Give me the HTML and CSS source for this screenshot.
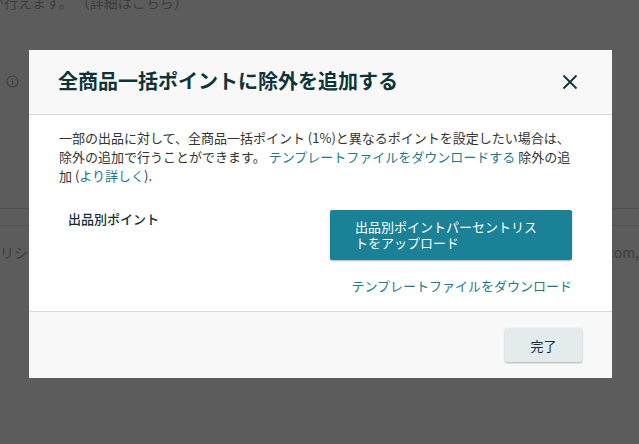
FILE: index.html
```html
<!DOCTYPE html>
<html lang="ja">
<head>
<meta charset="utf-8">
<title>全商品一括ポイントに除外を追加する</title>
<link rel="stylesheet" href="styles.css">
</head>
<body>
<main class="page">
  <p class="page-note">が行えます。 （詳細はこちら）</p>
  <div class="page-info">
    <svg class="info-icon" width="13" height="13" viewBox="0 0 13 13" aria-hidden="true">
      <circle cx="6.5" cy="6.5" r="5.5" fill="none" stroke="currentColor" stroke-width="1.1"/>
      <path d="M6.5 5.8v3.6" stroke="currentColor" stroke-width="1.2" fill="none"/>
      <circle cx="6.5" cy="4" r=".8" fill="currentColor"/>
    </svg>
  </div>
  <div class="page-rows">
    <div class="page-row"></div>
    <div class="page-row-text">
      <span>リシー</span><span class="page-row-end">com,</span>
    </div>
  </div>
</main>
<div class="overlay"></div>
<section class="modal">
  <header class="modal-head">
    <h1 class="modal-title">全商品一括ポイントに除外を追加する</h1>
    <svg class="close" width="16" height="16" viewBox="0 0 16 16" aria-label="閉じる">
      <path d="M1.5 1.5l13 13M14.5 1.5l-13 13" stroke="currentColor" stroke-width="1.8" fill="none"/>
    </svg>
  </header>
  <div class="modal-body">
    <p class="intro">一部の出品に対して、全商品一括ポイント (1%)と異なるポイントを設定したい場合は、除外の追加で行うことができます。 <a class="link" href="#">テンプレートファイルをダウンロードする</a> 除外の追加 (<a class="link" href="#">より詳しく</a>).</p>
    <div class="upload-row">
      <div class="upload-label">出品別ポイント</div>
      <div class="upload-col">
        <button class="btn-primary" type="button">出品別ポイントパーセントリストをアップロード</button>
        <a class="link download" href="#">テンプレートファイルをダウンロード</a>
      </div>
    </div>
  </div>
  <footer class="modal-foot">
    <button class="btn-done" type="button">完了</button>
  </footer>
</section>
</body>
</html>
```
FILE: styles.css
```css
* { box-sizing: border-box; }
html, body { margin: 0; height: 100%; overflow: hidden; }
body {
  background: #fff;
  color: #111;
  font-family: "Noto Sans CJK JP", "Noto Sans", sans-serif;
  font-size: 13px;
}
.page { height: 444px; overflow: hidden; color: #aaa; }
.page-note {
  margin: -8px 0 0 -10px;
  font-size: 14px;
  line-height: 20px;
  white-space: nowrap;
}
.page-info { padding: 63px 0 0 6px; height: 88px; }
.info-icon { display: block; }
.page-rows { margin-top: 108px; border-top: 1px solid #ddd; }
.page-row { height: 17px; border-bottom: 1px solid #ddd; }
.page-row-text {
  display: flex;
  justify-content: space-between;
  margin-top: 16px;
  line-height: 20px;
  font-size: 14px;
}
.overlay { position: fixed; inset: 0; background: rgba(0, 0, 0, .64); }
.modal {
  position: fixed;
  left: 29px;
  top: 50px;
  width: 583px;
  height: 328px;
  background: #fff;
  display: flex;
  flex-direction: column;
}
.modal-head {
  height: 65px;
  flex: none;
  background: #f8f8f8;
  border-bottom: 1px solid #d5d9d9;
  padding: 0 34px 2px 29px;
  display: flex;
  align-items: center;
  justify-content: space-between;
}
.modal-title {
  margin: 0;
  font-size: 20px;
  line-height: 28px;
  font-weight: 700;
  color: #0f3438;
}
.close { color: #0f3438; flex: none; margin-top: 2px; width: 16px; height: 16px; }
.modal-body { flex: 1; padding: 13px 40px 0 30px; }
.intro {
  margin: 0;
  font-size: 13px;
  line-height: 19px;
  color: #333;
}
.link { color: #1a7b8e; text-decoration: none; }
.upload-row { display: flex; justify-content: space-between; margin-top: 25px; padding-left: 9px; }
.upload-label { font-size: 13px; line-height: 20px; font-weight: 500; color: #0f2f33; margin-top: -1px; }
.upload-col { width: 242px; display: flex; flex-direction: column; align-items: flex-end; }
.btn-primary {
  width: 242px;
  height: 50px;
  border: 0;
  border-radius: 2px;
  background: #1b8197;
  box-shadow: 0 1px 2px rgba(0, 0, 0, .3);
  color: #fff;
  font: 400 13px/16px "Noto Sans CJK JP", sans-serif;
  text-align: left;
  padding: 0 25px;
}
.download { font-size: 13px; line-height: 20px; margin-top: 16px; }
.modal-foot {
  height: 67px;
  flex: none;
  background: #f8f8f8;
  border-top: 1px solid #d5d9d9;
  padding: 16px 30px 0 0;
  display: flex;
  justify-content: flex-end;
  align-items: flex-start;
}
.btn-done {
  width: 77px;
  height: 34px;
  border: 0;
  border-radius: 2px;
  background: #e3ebec;
  box-shadow: 0 1px 2px rgba(0, 0, 0, .3);
  color: #0f2f33;
  font: 400 13px/1 "Noto Sans CJK JP", sans-serif;
}
```
